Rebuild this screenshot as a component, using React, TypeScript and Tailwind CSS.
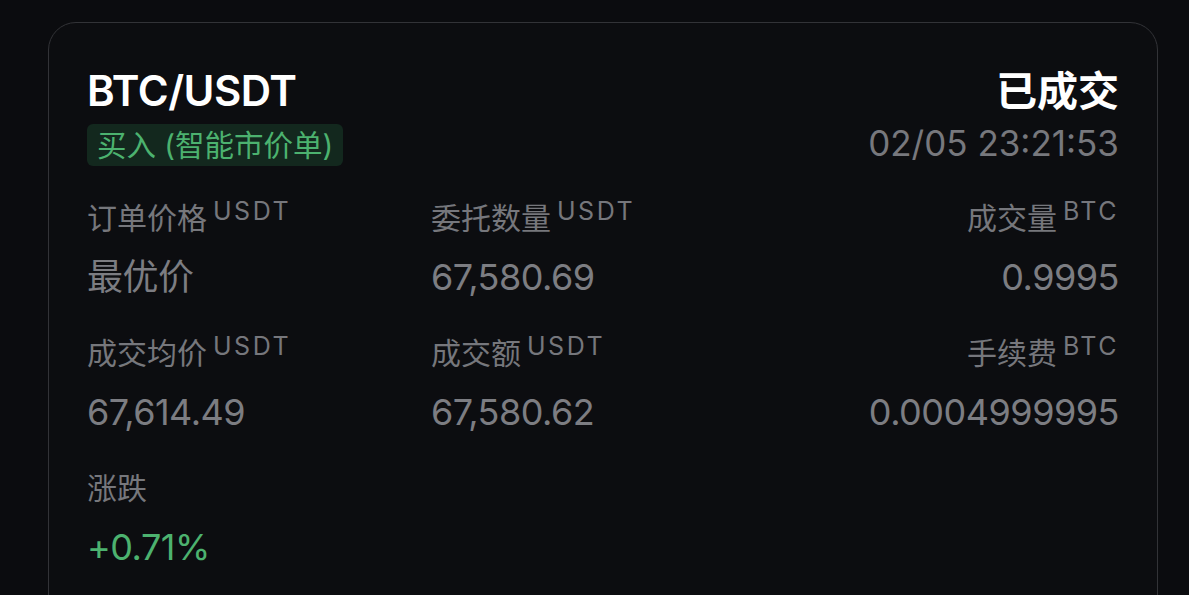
import React from 'react'

const font = { fontFamily: 'Inter, "Noto Sans CJK SC", sans-serif' }

function Field({ label, unit, value, align = 'left', green = false }: { label: string; unit?: string; value: string; align?: 'left' | 'right'; green?: boolean }) {
  return (
    <div className={align === 'right' ? 'text-right' : 'text-left'}>
      <div className="text-[30px] leading-[40px] text-[#76777c]">
        {label}
        {unit && <sup className="ml-[6px] align-top text-[25px] leading-[25px] tracking-[2.5px] relative top-[1px]">{unit}</sup>}
      </div>
      <div className={`mt-[19px] text-[36px] leading-[40px] tracking-[-0.5px] ${green ? 'text-[#4cb26f]' : 'text-[#7c7d82]'}`}>{value}</div>
    </div>
  )
}

export default function App() {
  return (
    <div className="min-h-[595px] bg-[#0b0c0f] pt-[22px] overflow-hidden" style={font}>
      <div className="ml-[48px] w-[1110px] h-[620px] rounded-[28px] border border-[#323337] bg-[#0c0d10] px-[38px] pt-[44px]">
        <div className="flex justify-between">
          <div>
            <div className="text-[42px] leading-[48px] font-semibold text-white tracking-[-0.5px]">BTC/USDT</div>
            <div className="mt-[9px] inline-flex items-center h-[42px] px-[10px] rounded-[6px] bg-[#13281e] text-[29.5px] text-[#4cb26f]">
              买入 (智能市价单)
            </div>
          </div>
          <div className="text-right">
            <div className="text-[41px] leading-[48px] font-semibold text-white">已成交</div>
            <div className="mt-[7px] text-[35px] leading-[42px] text-[#77787d]">02/05 23:21:53</div>
          </div>
        </div>
        <div className="mt-[32px] grid grid-cols-3 gap-y-[36px]">
          <Field label="订单价格" unit="USDT" value="最优价" />
          <Field label="委托数量" unit="USDT" value="67,580.69" />
          <Field label="成交量" unit="BTC" value="0.9995" align="right" />
          <Field label="成交均价" unit="USDT" value="67,614.49" />
          <Field label="成交额" unit="USDT" value="67,580.62" />
          <Field label="手续费" unit="BTC" value="0.0004999995" align="right" />
          <Field label="涨跌" value="+0.71%" green />
        </div>
      </div>
    </div>
  )
}
